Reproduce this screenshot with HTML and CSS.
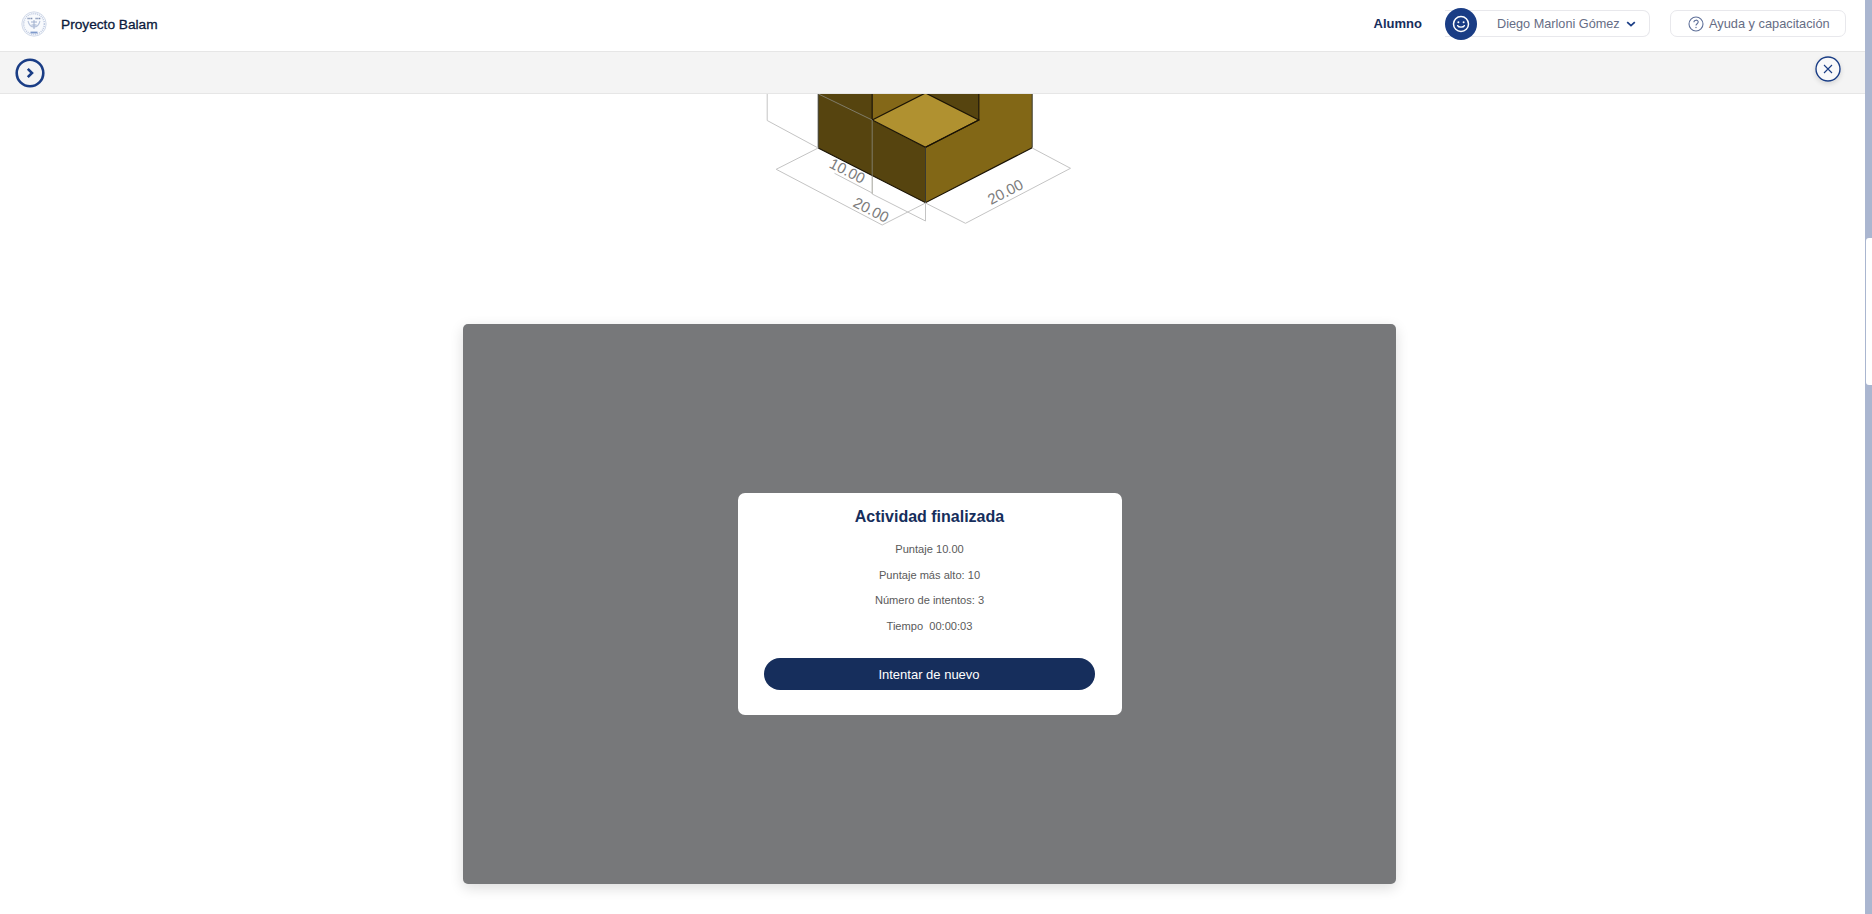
FILE: index.html
```html
<!DOCTYPE html>
<html lang="es">
<head>
<meta charset="utf-8">
<title>Proyecto Balam</title>
<link rel="stylesheet" href="styles.css">
</head>
<body>
<div class="shell">
  <div class="app">
    <header class="topbar">
      <div class="brand">
        <svg class="seal" viewBox="0 0 26 26" aria-hidden="true">
          <circle cx="13" cy="13" r="12.2" fill="#f8fafd" stroke="#d3dbea" stroke-width="1"/>
          <circle cx="13" cy="13" r="10.4" fill="none" stroke="#c0cbe1" stroke-width="1.6" stroke-dasharray="1 1"/>
          <path d="M6.500 7.500h5M14.500 7.500h5" stroke="#7486ab" stroke-width="1.500" stroke-dasharray="1.200 .6"/>
          <path d="M7 10c1 4 3 6 6 6s5-2 6-6" fill="none" stroke="#b7c4dc" stroke-width="1.100"/>
          <path d="M13 9v9M10 11h6M10.500 14h5" stroke="#98a9ca" stroke-width=".9"/>
          <path d="M9.500 21.500h7" stroke="#7f9acb" stroke-width="1.800"/>
        </svg>
        <span class="brand-name">Proyecto Balam</span>
      </div>
      <div class="top-actions">
        <span class="role">Alumno</span>
        <div class="user">
          <span class="avatar">
            <svg viewBox="0 0 32 32" width="32" height="32" aria-hidden="true">
              <circle cx="16" cy="16" r="7.500" fill="none" stroke="#fff" stroke-width="1.500"/>
              <circle cx="13.400" cy="14.200" r="1" fill="#fff"/>
              <circle cx="18.600" cy="14.200" r="1" fill="#fff"/>
              <path d="M12.600 17.600c1 2 5.800 2 6.800 0" fill="none" stroke="#fff" stroke-width="1.300" stroke-linecap="round"/>
            </svg>
          </span>
          <span class="user-name">Diego Marloni Gómez</span>
          <svg class="chev" viewBox="0 0 10 6" width="10" height="6" aria-hidden="true">
            <path d="M1.200 1.200 5 4.600l3.800-3.400" fill="none" stroke="#1a3d85" stroke-width="1.800"/>
          </svg>
        </div>
        <div class="help">
          <svg viewBox="0 0 16 16" width="16" height="16" aria-hidden="true">
            <circle cx="8" cy="8" r="7" fill="none" stroke="#5f7099" stroke-width="1.100"/>
            <path d="M5.900 6.300c0-2.800 4.300-2.800 4.300-.2 0 1.600-2.200 1.600-2.200 3.300" fill="none" stroke="#5f7099" stroke-width="1.100"/>
            <circle cx="8" cy="11.500" r=".7" fill="#5f7099"/>
          </svg>
          <span>Ayuda y capacitación</span>
        </div>
      </div>
    </header>
    <div class="subbar">
      <svg class="open-btn" viewBox="0 0 30 30" width="30" height="30" aria-hidden="true">
        <circle cx="15" cy="15" r="13.300" fill="none" stroke="#1a3d85" stroke-width="2.600"/>
        <path d="M12.800 10.800 17 15l-4.200 4.200" fill="none" stroke="#1a3d85" stroke-width="2.600"/>
      </svg>
      <span class="close-btn">
        <svg viewBox="0 0 26 26" width="26" height="26" aria-hidden="true">
          <circle cx="13" cy="13" r="12" fill="#f9f9fa" stroke="#1a3d85" stroke-width="1.400"/>
          <path d="M9 9l8 8M17 9l-8 8" stroke="#1a3d85" stroke-width="1.100"/>
        </svg>
      </span>
    </div>
    <main class="content">
      <svg class="figure" viewBox="739.5 94 380 136" width="380" height="136" role="img" aria-label="Pieza isométrica con cotas">
        <polygon points="817.700,94 871.700,94 871.700,120 925,147.300 925,202.700 817.700,148" fill="#56440f"/>
        <polygon points="871.700,94 925,94 871.700,120" fill="#846818"/>
        <polygon points="925,94 978.300,94 978.300,120" fill="#56440f"/>
        <polygon points="925,147.300 978.300,120 978.300,94 1031.700,94 1031.700,147.700 925,202.700" fill="#826716"/>
        <polygon points="925,93 978.300,120 925,147.300 871.700,120" fill="#b09130"/>
        <g fill="none" stroke="#191204" stroke-width="1.200">
          <path d="M871.700 94V120L925 147.300 978.300 120V94"/>
          <path d="M871.700 120 925 93 978.300 120 925 147.300"/>
          <path d="M817.700 148 925 202.700 1031.700 147.700"/>
        </g>
        <g fill="none" stroke="#3a3a30" stroke-width="1">
          <path d="M817.700 94V148M925 147.300V202.700M1031.700 94V147.700"/>
        </g>
        <g fill="none" stroke="#8a8a80" stroke-width=".8">
          <path d="M818 94 871.700 120V194"/>
        </g>
        <g fill="none" stroke="#c4c4c4" stroke-width="1">
          <path d="M766.700 94V120.500L817.700 148 775.700 169.300 881.700 225 925 203V221"/>
          <path d="M871.700 194 925 221M834 173.300 871.700 193"/>
          <path d="M925 203 965 223.300 1070 168.300 1031.700 148"/>
        </g>
        <g class="dim">
          <text x="846.700" y="176" transform="rotate(27 846.700 171)">10.00</text>
          <text x="870.500" y="215" transform="rotate(27 870.500 210)">20.00</text>
          <text x="1005" y="197" transform="rotate(-27 1005 192)">20.00</text>
        </g>
      </svg>
      <section class="stage">
        <div class="result">
          <h2 class="result-title">Actividad finalizada</h2>
          <p class="result-line">Puntaje 10.00</p>
          <p class="result-line">Puntaje más alto: 10</p>
          <p class="result-line">Número de intentos: 3</p>
          <p class="result-line">Tiempo&nbsp; 00:00:03</p>
          <button class="retry" type="button">Intentar de nuevo</button>
        </div>
      </section>
    </main>
  </div>
  <div class="scrollbar"><div class="thumb"></div></div>
</div>
</body>
</html>
```

FILE: styles.css
```css
* { box-sizing: border-box; }
html, body { margin: 0; height: 100%; overflow: hidden; }
body { font-family: "Liberation Sans", Arial, sans-serif; background: #fff; color: #333; }

.shell { display: flex; height: 914px; }
.app { flex: 1; min-width: 0; display: flex; flex-direction: column; }

.topbar {
  height: 52px;
  flex: none;
  display: flex;
  align-items: flex-start;
  justify-content: space-between;
  padding: 8px 19px 0 21px;
  background: #fff;
  border-bottom: 1px solid #e6e6e6;
}
.brand { display: flex; align-items: center; gap: 14px; height: 32px; }
.seal { width: 26px; height: 26px; }
.brand-name { font-size: 13.7px; color: #0b1a3c; -webkit-text-stroke: .3px #0b1a3c; }

.top-actions { display: flex; align-items: flex-start; }
.role { font-size: 13px; font-weight: 700; color: #162e5c; line-height: 32px; margin-right: 23px; }
.user {
  position: relative;
  width: 205px;
  height: 27px;
  margin-top: 2px;
  display: flex;
  align-items: center;
  padding-left: 52px;
  border: 1px solid #e8e8ec;
  border-left: 0;
  border-radius: 0 7px 7px 0;
  background: #fff;
}
.avatar {
  position: absolute;
  left: 0;
  top: -3px;
  width: 32px;
  height: 32px;
  border-radius: 50%;
  background: #1a3d85;
}
.avatar svg { display: block; }
.user-name { font-size: 12.7px; color: #666d85; white-space: nowrap; }
.chev { margin-left: 6px; }

.help {
  width: 176px;
  height: 27px;
  margin: 2px 0 0 20px;
  display: flex;
  align-items: center;
  gap: 5px;
  padding-left: 17px;
  border: 1px solid #e8e8ec;
  border-radius: 7px;
  font-size: 12.8px;
  color: #666d85;
  white-space: nowrap;
}

.subbar {
  height: 42px;
  flex: none;
  display: flex;
  align-items: flex-start;
  justify-content: space-between;
  padding: 6px 24px 0 15px;
  background: #f4f4f4;
  border-bottom: 1px solid #e6e6e6;
}
.open-btn { display: block; }
.close-btn { display: block; height: 26px; margin-top: -2px; border-radius: 50%; box-shadow: 0 2px 5px rgba(0,0,0,.12); }
.close-btn svg { display: block; }

.content {
  flex: 1;
  min-height: 0;
  overflow: hidden;
  display: flex;
  flex-direction: column;
  align-items: center;
  padding-right: 6px;
  background: #fff;
}
.figure { display: block; flex: none; }
.dim text { font-size: 15px; fill: #7c7c7c; text-anchor: middle; font-family: "Liberation Sans", Arial, sans-serif; }

.stage {
  flex: none;
  width: 933px;
  height: 560px;
  margin-top: 94px;
  display: flex;
  align-items: center;
  justify-content: center;
  background: #77787a;
  border-radius: 5px;
  box-shadow: 0 4px 14px rgba(0,0,0,.14);
}
.result {
  width: 384px;
  height: 222px;
  padding: 15px 26px 0;
  background: #fff;
  border-radius: 7px;
  text-align: center;
}
.result-title { margin: 0 0 11px; font-size: 16px; line-height: 18px; font-weight: 700; color: #162e5c; }
.result-line { margin: 0; font-size: 11.1px; line-height: 25.5px; color: #5a5a5a; white-space: pre-wrap; }
.retry {
  display: block;
  width: 331px;
  height: 32px;
  margin-top: 19px;
  border: 0;
  border-radius: 16px;
  background: #162e5c;
  color: #fff;
  font: 13px "Liberation Sans", Arial, sans-serif;
}

.scrollbar { flex: none; width: 7px; background: #aab6d0; }
.thumb { width: 6px; height: 147px; margin: 238px 0 0 1px; background: #fff; border-radius: 3px 0 0 3px; }
```
